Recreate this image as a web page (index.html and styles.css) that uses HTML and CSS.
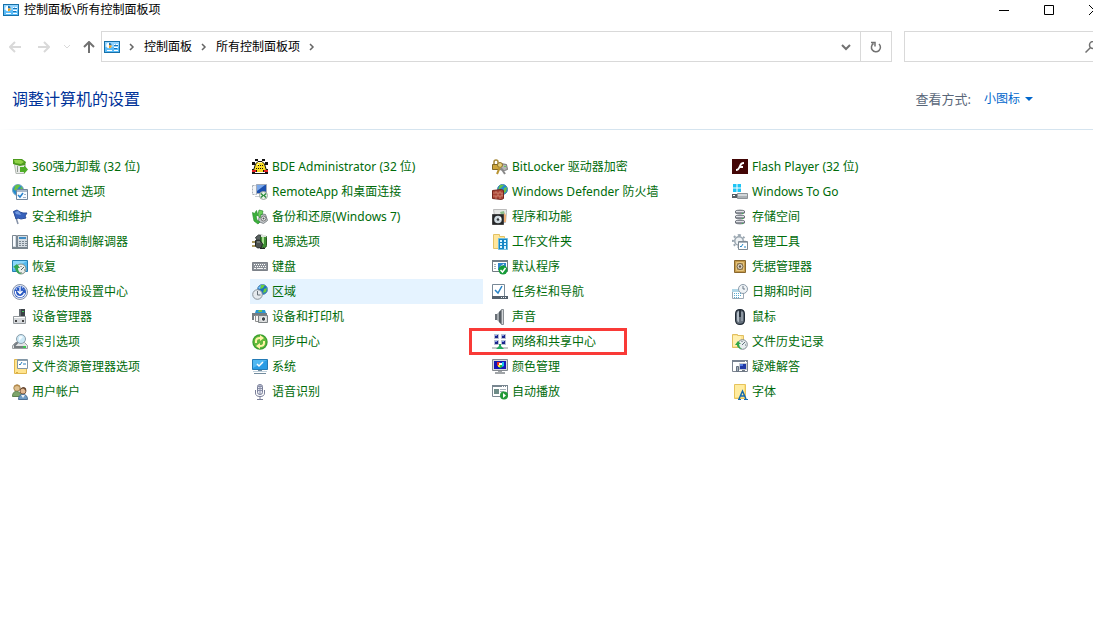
FILE: index.html
```html
<!DOCTYPE html>
<html lang="zh-CN">
<head>
<meta charset="utf-8">
<meta name="viewport" content="width=device-width, initial-scale=1">
<title>控制面板\所有控制面板项</title>
<link rel="stylesheet" href="styles.css">
</head>
<body>
<svg class="sprite" aria-hidden="true">
  <symbol id="panel" viewBox="0 0 16 12">
    <path fill="#1670a8" d="M0 0h16v12H0z"/><path fill="#8fd3ff" d="M1 1h14v10H1z"/><path fill="#5bbcf8" d="M1 6h14v5H1z"/>
    <circle cx="5" cy="4.500" r="2.700" fill="#fff"/><path fill="#1673b5" d="M5 4.500V1.800a2.700 2.700 0 0 1 2.700 2.700z"/><path fill="#f2a31b" d="M5 4.500h2.700A2.700 2.700 0 0 1 5 7.200z"/>
    <path fill="#fff" d="M10 3h1v1h-1zm2 0h2v1h-2zm-2 3h4v1h-4zM3 9h5v1H3zm7 0h4v1h-4z"/><path fill="#1673b5" d="M10 4h4v1h-4zm0 3h3v1h-3z"/>
  </symbol>
</svg>
<div class="window">
  <header class="titlebar">
    <svg class="panel-icon"><use href="#panel"/></svg>
    <h1 class="title">控制面板\所有控制面板项</h1>
    <button class="caption" aria-label="最小化"><svg viewBox="0 0 10 10"><path d="M0 5.500h10"/></svg></button>
    <button class="caption" aria-label="最大化"><svg viewBox="0 0 10 10"><path d="M.5.500h9v9h-9z"/></svg></button>
    <button class="caption" aria-label="关闭"><svg viewBox="0 0 10 10"><path d="m0 0 10 10M10 0 0 10"/></svg></button>
  </header>
  <nav class="navbar" aria-label="导航">
    <button class="nav-button" disabled aria-label="后退"><svg viewBox="0 0 12 12"><path d="M12 6H1m5-5L1 6l5 5"/></svg></button>
    <button class="nav-button" disabled aria-label="前进"><svg viewBox="0 0 12 12"><path d="M0 6h11M6 1l5 5-5 5"/></svg></button>
    <button class="nav-button recent" disabled aria-label="最近浏览的位置"><svg viewBox="0 0 12 12"><path d="m3 4 3 3 3-3"/></svg></button>
    <button class="nav-button up" aria-label="上移"><svg viewBox="0 0 12 12"><path d="M6 12V1M1 6l5-5 5 5"/></svg></button>
    <div class="address">
      <svg class="panel-icon"><use href="#panel"/></svg>
      <svg class="chevron" viewBox="0 0 6 8"><path d="m1 1 3 3-3 3"/></svg>
      <a class="crumb" href="#">控制面板</a>
      <svg class="chevron" viewBox="0 0 6 8"><path d="m1 1 3 3-3 3"/></svg>
      <a class="crumb" href="#">所有控制面板项</a>
      <svg class="chevron" viewBox="0 0 6 8"><path d="m1 1 3 3-3 3"/></svg>
      <button class="history" aria-label="以前的位置"><svg viewBox="0 0 12 12"><path d="m2 4 4 4 4-4"/></svg></button>
      <button class="refresh" aria-label="刷新"><svg viewBox="0 0 12 12"><path d="M3.500 2.500A4.500 4.500 0 1 0 9 3M1 1.500h4v4"/></svg></button>
    </div>
    <div class="search">
      <input type="search" aria-label="搜索控制面板">
      <svg viewBox="0 0 12 12"><circle cx="8" cy="4" r="3.500"/><path d="M5.500 6.500.5 11.500"/></svg>
    </div>
  </nav>
</div>
<main>
  <div class="heading">
    <h2>调整计算机的设置</h2>
    <span class="view-label">查看方式:</span>
    <button class="view-button">小图标<i class="caret"></i></button>
  </div>
  <ul class="items">
    <li><a href="#"><svg viewBox="0 0 16 16"><path fill="#e9ebe9" stroke="#b3b9b3" d="M2.500 5.500h11l-1.500 9H4z"/><path fill="#4c9a1d" d="M1 0h9l4 3-1 3-5 1-7-2z"/><path fill="#8fd146" d="M2 1h7l3 2-3 2-6-1z"/><path fill="#4fae28" d="M8 8h4V6l4 4.500-4 4.500v-2H8z"/><path stroke="#8f9a8f" d="M5.500 7v6"/></svg>360强力卸载 (32 位)</a></li>
    <li><a href="#"><svg viewBox="0 0 16 16"><path fill="#111" d="M0 3h3v3H0zM3 0h3v2H3zm7 0h3v2h-3zm3 3h3v3h-3zM0 10h16v5H0z"/><path fill="#f8dc22" stroke="#111" d="M1.500 11.500 3.500 5 6 2.500h4L12.500 5l2 6.500z"/><path fill="#fff7a8" d="M6 3h4v1H6zM5 5h2v1H5z"/><path fill="#e32222" d="M0 11h4v2H0zm12 0h4v2h-4z"/><path fill="#fff" d="M3 13h10v1H3z"/><path stroke="#111" stroke-dasharray="1 1" d="M4 9.500h8M6 6.500h5"/><path fill="#f8dc22" d="M5 11h6v2H5z"/></svg>BDE Administrator (32 位)</a></li>
    <li><a href="#"><svg viewBox="0 0 16 16"><path fill="none" stroke="#a88a3a" stroke-width="1.500" d="M2 6V3a2 2 0 0 1 4 0v3"/><path fill="#cda53b" stroke="#806726" d="M.5 5.500h7v5h-7z"/><path fill="#b5b5b5" stroke="#777" d="m8.500 4.500 6 1 1 5-3 1-5-1z"/><circle cx="8" cy="6" r="2.500" fill="#e7cf7a" stroke="#8d722a"/><path stroke="#b99432" stroke-width="2" d="m8 8-3 7"/><path stroke="#888" stroke-width="2" d="m9 9 4 6"/><path fill="#65c957" d="M12 7h2v1h-2z"/></svg>BitLocker 驱动器加密</a></li>
    <li><a href="#"><svg viewBox="0 0 16 16"><path fill="#430606" d="M0 0h16v15H0z"/><path fill="#fff" d="M12 3v2c-2 0-2 .7-3 2h2v2H8c-1 2-2 3-4 3v-2c2 0 2.300-1.500 3-3 1-2.500 2-4 5-4z"/></svg>Flash Player (32 位)</a></li>

    <li><a href="#"><svg viewBox="0 0 16 16"><circle cx="6" cy="6" r="5.500" fill="#238bd0" stroke="#7ca9c6"/><path fill="#6ac241" d="M3 2c3-2 5-1 5 0L6 4 5 7 2 6zm6 0 2 3-3 1z"/><path fill="#f7fbff" stroke="#72869c" d="M4.500 5.500h11v10h-11z"/><path fill="#a8b8c9" d="M5 6h10v2H5z"/><path fill="none" stroke="#2780cc" stroke-width="1.500" d="m6 11 2 2 3-4"/><path stroke="#9fb3c8" d="M11 13.500h3m-2-3h2"/></svg>Internet 选项</a></li>
    <li><a href="#"><svg viewBox="0 0 16 16"><path fill="#f3f5f7" stroke="#a9b0b7" stroke-dasharray="2 1" d="M.5 1.500h4v9h-4z"/><path fill="#1b4fae" stroke="#a3abb8" d="M4.500.5h10v9h-10z"/><path fill="#7ba8ea" d="M5 1h8L5 7z"/><path fill="#c7cdd2" d="M3 12h5v1H3z"/><circle cx="11.500" cy="11.500" r="4" fill="#e8f0e8" stroke="#9aa59c"/><path fill="none" stroke="#278c3a" stroke-width="1.300" d="m9 9.500 2 2-2 2m5-4-2 2 2 2"/></svg>RemoteApp 和桌面连接</a></li>
    <li><a href="#"><svg viewBox="0 0 16 16"><circle cx="10.500" cy="5.500" r="5" fill="#238bd0" stroke="#4389ad"/><path fill="#67c248" d="M8 1h4L9 4l-3 2zm4 3 3-1-1 5-2 1z"/><path fill="#a94234" stroke="#71261e" d="m.5 6.500 9-1 2 1v8l-2 1-9-1z"/><path stroke="#dfa28b" stroke-width=".6" d="M1 9h10M1 12h10M4 7v2m4-2v2m-2 0v3m4-3v3m-6 0v3m4-3v3"/></svg>Windows Defender 防火墙</a></li>
    <li><a href="#"><svg viewBox="0 0 16 16"><path fill="#1ec4f4" d="M1 0h3.500v3.500H1zm4.500 0H9v3.500H5.500zM1 4.500h3.500V8H1zm4.500 0H9V8H5.500z"/><path fill="#555d63" d="M0 10h5v4H0z"/><path fill="#aab0b4" stroke="#8d9398" d="M5.500 9.500h10v5h-10z"/><path fill="#d3d7da" d="M6 10h9v2H6z"/><path fill="#fff" d="M1 11h2v1H1z"/></svg>Windows To Go</a></li>

    <li><a href="#"><svg viewBox="0 0 16 16"><path stroke="#8793a8" stroke-width="1.500" d="m2 2 4 13"/><path fill="#3762bd" stroke="#2d4f9b" d="M1.500 2.500 5 1l3 2 3 1h4l-2 3 1 2-5 1-3-1-2 1z"/><path fill="#7299de" d="m3 3 3-1 2 2 1 2-5-1z"/></svg>安全和维护</a></li>
    <li><a href="#"><svg viewBox="0 0 16 16"><path fill="#c4c8cb" stroke="#81878b" d="m7.500 4.500 6 1 2 6-4 3-5-2z"/><circle cx="11.500" cy="9.500" r="2.500" fill="#eceeef" stroke="#777"/><circle cx="11.500" cy="9.500" r="1" fill="#555"/><path fill="#3cb13b" stroke="#2d8f31" stroke-width=".7" d="m.5 3.500 2 1 2-3 1.500 5-2 .5 1 4 3 2-2 2-4-3-1-5z"/><path fill="#6fd35b" stroke="#2d8f31" stroke-width=".7" d="m7 1 4 1-1 4-1-1-1 4-2-3z"/></svg>备份和还原(Windows 7)</a></li>
    <li><a href="#"><svg viewBox="0 0 16 16"><path fill="#e6e7e5" stroke="#bbb" d="M1.500.5h13v3l-1 10h-10z"/><path fill="#8dbd8a" d="m8 3 4-1 1 4-3 2z"/><path fill="#efb07a" d="m12 4 2 2v7h-3z"/><path fill="#252628" stroke="#444" d="M.5 5.500h11v10H.5z"/><circle cx="6" cy="10.500" r="3.800" fill="#cfd9df"/><path fill="#fff" d="m6 10 3-2v3z"/><circle cx="6" cy="10.500" r="1.300" fill="#34383b"/></svg>程序和功能</a></li>
    <li><a href="#"><svg viewBox="0 0 16 16"><g fill="#8f949c" stroke="#6f747d"><path d="M3.500 2a5 1.500 0 0 1 9 0v2a5 1.500 0 0 1-9 0zM3.500 7a5 1.500 0 0 1 9 0v2a5 1.500 0 0 1-9 0zM3.500 12a5 1.500 0 0 1 9 0v2a5 1.500 0 0 1-9 0z"/></g><path stroke="#dfe1e6" d="M4 2.500h8m-8 5h8m-8 5h8"/><path fill="#35c04d" d="M10 4h1v1h-1zm0 5h1v1h-1zm0 5h1v1h-1z"/></svg>存储空间</a></li>

    <li><a href="#"><svg viewBox="0 0 16 16"><path fill="#d5dce2" stroke="#7b8791" d="M.5 1.500h4v12h-4zM5.500 1.500h10v12h-10z"/><path fill="#f9fcff" d="M1 2h2v10H1z"/><path fill="#3e8bc4" d="M7 3h7v2H7z"/><path stroke="#7b8791" stroke-dasharray="2 1" d="M7 7.500h8m-8 2h8m-8 2h8"/><path fill="#79858e" d="M0 13h16v2H0z"/></svg>电话和调制解调器</a></li>
    <li><a href="#"><svg viewBox="0 0 16 16"><path fill="#596160" stroke="#303635" d="m3.500 3.500 3-2.500 5 .5-2 4.500-4 1z"/><rect x="8.500" y="1.500" width="6" height="12" rx="2" fill="#3d8f33" stroke="#29571f"/><path fill="#a9dc92" d="M10 3h2v7h-2z"/><path fill="#dfe5df" d="M9 1h5v2H9z"/><path stroke="#8d7a2c" stroke-width="1.500" d="M0 8h4m-4 4h4"/><path fill="#4b514e" stroke="#202523" d="m3.500 6.500 4-.5 3 3.500-1 4-4 .5-2-2z"/><path stroke="#9aa39e" d="m5 8 3 0"/><path stroke="#202523" d="M8 14.500h5"/></svg>电源选项</a></li>
    <li><a href="#"><svg viewBox="0 0 16 16"><path fill="#ffe69c" stroke="#e3c264" d="M1.500.5h6v2h5v12h-11z"/><path fill="#1686c5" stroke="#71bddd" d="M6.500 4.500h9v11h-9z"/><path fill="#d9f4ff" d="M8 6h2v2H8zm4 0h2v2h-2zM8 9h2v2H8zm4 0h2v2h-2zm-4 3h2v2H8zm4 0h2v3h-2z"/></svg>工作文件夹</a></li>
    <li><a href="#"><svg viewBox="0 0 16 16"><g fill="none" stroke="#9aa6b0"><circle cx="7" cy="7" r="4" stroke-width="2"/><path stroke-width="2" stroke-dasharray="2 2.500" d="M7 1a6 6 0 1 1-.1 0"/></g><circle cx="7" cy="7" r="3.500" fill="#eef1f3"/><path fill="#fff" stroke="#7d8993" d="M6.500 7.500h9v8h-9z"/><path fill="#a8b4bd" d="M7 8h8v1H7z"/><path fill="none" stroke="#2386c6" d="m8 12 1 1 2-3m1 3h2"/></svg>管理工具</a></li>

    <li><a href="#"><svg viewBox="0 0 16 16"><path fill="#55b9ed" stroke="#2681b3" d="M.5 1.500h15v11H.5z"/><path fill="#8bd7fa" d="M1 2h14L1 10z"/><circle cx="9" cy="10" r="5" fill="#e9eeeb" stroke="#7f8f88"/><path fill="#32a650" d="m1 8 4-3 3 4H6q0 4 4 6-6 0-7-6z"/><path fill="none" stroke="#56615d" d="m9 11 3-3m-3-1v1m4 3h-1m-3 3v-1"/></svg>恢复</a></li>
    <li><a href="#"><svg viewBox="0 0 16 16"><path fill="#8b9097" stroke="#7c8188" d="M.5 3.500h15v8H.5z"/><path stroke="#fff" stroke-dasharray="1 1" d="M2 5.500h12m-11 2h11"/><path stroke="#f5f5f5" d="M2 9.500h2m1 0h6m1 0h2"/></svg>键盘</a></li>
    <li><a href="#"><svg viewBox="0 0 16 16"><path fill="#fff" stroke="#717b83" d="M.5 1.500h15v11H.5z"/><path fill="#737d86" d="M0 1h16v2H0z"/><path fill="#2f87cb" d="M6 4h8v7H6z"/><path stroke="#a5afb7" d="M2 5.500h2m-2 2h2m-2 2h2"/><path stroke="#fff" d="m8 8 4-3"/><circle cx="11" cy="11" r="4.500" fill="#159b38"/><path fill="none" stroke="#fff" stroke-width="1.500" d="m8.500 11 2 2 3-4"/></svg>默认程序</a></li>
    <li><a href="#"><svg viewBox="0 0 16 16"><path fill="#c49b4b" stroke="#8a672d" d="M2.500 1.500h11v12h-11z"/><path fill="none" stroke="#e5c581" d="M4.500 3.500h7v8h-7z"/><circle cx="8" cy="7.500" r="3" fill="#e1d8c4" stroke="#736247"/><circle cx="8" cy="7.500" r="1.200" fill="#65584a"/></svg>凭据管理器</a></li>

    <li><a href="#"><svg viewBox="0 0 16 16"><circle cx="8" cy="8" r="7.500" fill="#e5eaf3" stroke="#8592ab"/><circle cx="8" cy="8" r="6" fill="#2857c1"/><path fill="none" stroke="#fff" stroke-width="1.300" d="M3.500 7a4.500 4.500 0 0 0 9 2M8 3v6M5.500 7 8 9.500 10.500 7"/><path fill="none" stroke="#c7dcff" stroke-width="1.500" stroke-dasharray="1 1.500" d="M4 5.500q2-3 4-3t4 3"/></svg>轻松使用设置中心</a></li>
    <li class="selected"><a href="#"><svg viewBox="0 0 16 16"><circle cx="10.500" cy="5.500" r="5" fill="#1b71c1" stroke="#5c91b9"/><path fill="#6ccf3d" d="M9 1h4l-2 3-3 1zm3 4 3-1-1 4-3 1z"/><path fill="#83c9ff" d="m6 4 3-3-1 4z"/><circle cx="5.500" cy="10.500" r="4.800" fill="#e5eaee" stroke="#899299"/><path fill="none" stroke="#667078" d="M5.500 7v4h3"/></svg>区域</a></li>
    <li><a href="#"><svg viewBox="0 0 16 16"><path fill="#fff" stroke="#788896" d="M.5.5h12v12H.5z"/><path fill="none" stroke="#2682c5" stroke-width="1.500" d="m3 6 3 3 4-7"/><path fill="#54616d" d="M0 12h16v3H0z"/><path fill="#f0f3f5" d="M9 13h1v1H9zm2 0h1v1h-1zm2 0h1v1h-1z"/></svg>任务栏和导航</a></li>
    <li><a href="#"><svg viewBox="0 0 16 16"><path fill="#fff" stroke="#9ca9b4" d="M.5 5.500h11v9H.5z"/><path fill="#b1d6e6" d="M0 5h11v3H0z"/><path stroke="#5aabcf" stroke-dasharray="1 1" d="M2 9.500h8m-8 2h8m-8 2h6"/><circle cx="11" cy="5" r="4.500" fill="#eef2f5" stroke="#8d9caa"/><path fill="none" stroke="#6b7987" d="M11 2v3h2"/></svg>日期和时间</a></li>

    <li><a href="#"><svg viewBox="0 0 16 16"><path fill="#3b4145" d="M7 0h6v8H7z"/><path fill="#666d72" d="M7 0h2v8H7z"/><path fill="#43cb5c" d="M10 2h2v1h-2z"/><path fill="#d7dadd" stroke="#959a9e" d="M1.500 7.500h12v7h-12z"/><path fill="#fff" d="M2 8h11v1H2z"/><path fill="#444" d="M3 11h2v2H3zm7 0h2v2h-2z"/></svg>设备管理器</a></li>
    <li><a href="#"><svg viewBox="0 0 16 16"><path fill="#2897d3" d="M4 1h9l1 3H3z"/><path fill="#79c44a" d="M7 1h3v2H6z"/><path fill="#767d82" d="M0 4h15v3H0zM0 7h2v4H0z"/><path fill="#f7f7f7" stroke="#929292" d="M3.500 6.500h3v6h-3z"/><path fill="#d5d7d7" stroke="#7b8083" d="M6.500 6.500h9v7h-9z"/><circle cx="11.500" cy="10" r="2.300" fill="#42494e" stroke="#fff"/></svg>设备和打印机</a></li>
    <li><a href="#"><svg viewBox="0 0 16 16"><path fill="#6b7177" d="M3 5h2v6H3z"/><path fill="#a4aaaf" d="m5 5 5-5v16l-5-5z"/><path fill="#555c62" d="m7 3 2-2v14l-2-2z"/><path fill="#d4d7da" stroke="#878d92" d="M9.500.5h2v15h-2z"/></svg>声音</a></li>
    <li><a href="#"><svg viewBox="0 0 16 16"><path fill="#68737f" stroke="#202a35" stroke-width="1.200" d="M3.600 5q0-4.400 4.400-4.400T12.400 5v6q0 4.400-4.400 4.400T3.600 11z"/><path fill="#b3bdc7" d="M5 4q1-2 2-2v11q-2 0-2-3z"/><path stroke="#17202a" stroke-width="1.500" d="M8 1v7"/><path stroke="#b3bdc7" d="M10 3v9"/></svg>鼠标</a></li>

    <li><a href="#"><svg viewBox="0 0 16 16"><path fill="#e3e5e6" stroke="#9da0a2" d="m3.500 8.500-3 3v3h15v-3l-3-3z"/><path fill="#777d80" d="M2 12h12v2H2z"/><path fill="#3cc34f" d="M11 12h3v2h-3z"/><path stroke="#737b82" stroke-width="2" d="m6 8-4 4"/><circle cx="9" cy="5" r="4.500" fill="#cce8f5" stroke="#8b9eab"/><path fill="#f4fbff" d="M7 3q2-2 4 0L7 7z"/></svg>索引选项</a></li>
    <li><a href="#"><svg viewBox="0 0 16 16"><circle cx="8" cy="8" r="7.700" fill="#399f2e"/><circle cx="8" cy="8" r="6.500" fill="#63b93d"/><path fill="none" stroke="#fff3a6" stroke-width="2" d="M4 9V7q0-3 4-3M12 7v2q0 3-4 3"/><path fill="#fff3a6" d="m8 1 4 3-4 3zM8 9l-4 3 4 3z"/></svg>同步中心</a></li>
    <li class="marked"><a href="#"><svg viewBox="0 0 16 16"><g fill="#1d258b" stroke="#b9c0d2"><path d="M2.500.5h4v4h-4zM9.500.5h4v4h-4zM2.500 6.500h4v4h-4zM9.500 6.500h4v4h-4z"/></g><path fill="#839ee9" d="M3 1h2v1H3zm7 0h2v1h-2zM3 7h2v1H3zm7 0h2v1h-2z"/><path fill="#c5c9c9" d="M0 13h16v2H0z"/><path fill="#25a85d" d="M7 10h2v2l3 3H4l3-3z"/></svg>网络和共享中心</a></li>
    <li><a href="#"><svg viewBox="0 0 16 16"><path fill="#ffe391" stroke="#dfbf60" d="M.5.5h5v1h6v12H.5z"/><path fill="#fff0b0" d="M1 2h8v10H1z"/><circle cx="10.500" cy="10.500" r="4.800" fill="#e7edef" stroke="#7f8990"/><path fill="#2fa646" d="m3 11 3-4 3 3H7q0 3 3 5-5-1-5-4z"/><path fill="none" stroke="#62717a" d="m10 11 3-3m-3-1v1m3 3h1"/></svg>文件历史记录</a></li>

    <li><a href="#"><svg viewBox="0 0 16 16"><path fill="#ffe48f" stroke="#dfb64e" d="M2.500.5h12v14h-12z"/><path fill="#d9ae40" d="M4 13h2v1H4z"/><path fill="#fff" stroke="#8296a6" d="M5.500.5h10v9h-10z"/><path fill="#8aa0b1" d="M6 1h9v1H6z"/><path fill="none" stroke="#287ebd" d="m7 5 1 1 2-3m1 2h3"/></svg>文件资源管理器选项</a></li>
    <li><a href="#"><svg viewBox="0 0 16 16"><path fill="#2a9ce5" stroke="#247bb6" d="M.5.5h15v10H.5z"/><path fill="#51b8f2" d="M1 1h14L1 9z"/><path fill="none" stroke="#fff" stroke-width="1.500" d="m5 5 2 2 4-4"/><path fill="#738c9e" d="M6 11h4v2H6zM2 14h12v1H2z"/><path stroke="#bfd0dc" d="M1 12.500h14"/></svg>系统</a></li>
    <li><a href="#"><svg viewBox="0 0 16 16"><path fill="#d8d9da" stroke="#858a90" d="M.5.5h15v11H.5z"/><path fill="#1616b5" d="M2 2h12v8H2z"/><path fill="#e62b23" d="M5 3h3v4H5z"/><path fill="#29bf38" d="M8 5h4L9 9H7z"/><path fill="#16c1ed" d="M10 3h2v4l-2 1z"/><path fill="#fff" d="M7 4h3v2H7z"/><path fill="#f8e337" d="M6 6h2v2H6z"/><path fill="#a1a5a8" d="M6 12h4v1H6zM3 13h10v2H3z"/></svg>颜色管理</a></li>
    <li><a href="#"><svg viewBox="0 0 16 16"><path fill="#fff" stroke="#7c8490" d="M.5 1.500h15v11H.5z"/><path fill="#798391" d="M0 1h16v2H0z"/><path fill="#fff" d="M13 2h1v1h-1z"/><path fill="#a5afbc" stroke="#65717f" d="M4.500 7.500h2v5h-2z"/><path fill="#2038a5" stroke="#c3c8cf" d="M7.500 4.500h7v6h-7z"/><path fill="#537de0" d="M8 5h3v2H8z"/><path fill="#707985" d="M10 11h3v1h-3zm-2 1h7v1H8z"/></svg>疑难解答</a></li>

    <li><a href="#"><svg viewBox="0 0 16 16"><circle cx="5" cy="4" r="3.200" fill="#e0c08e" stroke="#a5844f"/><path fill="#7ea56b" stroke="#5d824e" d="M.5 12.500q0-5 4-5t5 5z"/><path fill="#b58a4c" d="M2 3q1-3 5-2l1 2-3-1z"/><circle cx="11" cy="7" r="3" fill="#e2b890" stroke="#805c42"/><path fill="#6f9bc4" stroke="#4c6f94" d="M6.500 15.500q0-5 4.500-5t4.500 5z"/><path fill="#684832" d="M8 6q1-3 4-3 3 1 2 4l-3-3z"/><path fill="#eef2f5" d="m9 11 2 3 2-3z"/></svg>用户帐户</a></li>
    <li><a href="#"><svg viewBox="0 0 16 16"><path fill="#e5e7f0" stroke="#7a7f99" d="M5.500 2.500q0-2 2.500-2t2.500 2v6q0 2-2.500 2t-2.500-2z"/><path stroke="#8a90aa" d="M6 2.500h4m-4 2h4m-4 2h4M8 1v9"/><path fill="none" stroke="#7a7f99" d="M3.500 6v3q0 3.500 4.500 3.500t4.500-3.500V6M8 12v3m-3 .500h6"/></svg>语音识别</a></li>
    <li><a href="#"><svg viewBox="0 0 16 16"><path fill="#fff" stroke="#7b8790" d="M.5 1.500h15v11H.5z"/><path fill="#788690" d="M0 1h16v2H0z"/><path fill="#6e8c87" d="M2 5h5v5H2z"/><path stroke="#a7b2ba" d="M8 5.500h6m-6 2h4"/><path stroke="#fff" stroke-dasharray="1 1" d="M10 2.500h5"/><circle cx="12" cy="11.500" r="4" fill="#239a38"/><path fill="#fff" d="m11 9 3 2.500-3 2.500z"/></svg>自动播放</a></li>
    <li><a href="#"><svg viewBox="0 0 16 16"><path fill="#ffe077" stroke="#e6c35c" d="M2.500.5h11v14h-11z"/><path fill="#ffeca0" d="M3 1h9v12H3z"/><path fill="none" stroke="#1469ad" stroke-width="1.500" d="m7 15 3.500-8 3.500 8m-5-3h4"/><path stroke="#1469ad" d="M6 15.500h3m3 0h4"/></svg>字体</a></li>
  </ul>
</main>
</body>
</html>
```
FILE: styles.css
```css
* { box-sizing: border-box; }

body {
  margin: 0;
  overflow-x: hidden;
  background: #fff;
  color: #000;
  font: 12px/20px "Noto Sans", "Noto Sans CJK SC", sans-serif;
}

h1, h2 { margin: 0; font-weight: 400; }
button { margin: 0; padding: 0; border: 0; background: none; font: inherit; color: inherit; }
a { color: inherit; text-decoration: none; }
svg { flex: none; fill: none; }
.sprite { display: none; }
.panel-icon { width: 16px; height: 12px; }

/* The frame runs past the right edge of the viewport. */
.window { margin-right: -23px; }

.titlebar {
  display: flex;
  align-items: center;
  height: 20px;
  padding-left: 3px;
}
.title { flex: 1; margin-left: 5px; font-size: 12px; }
.caption { display: grid; place-items: center; width: 45px; height: 20px; }
.caption svg { width: 10px; height: 10px; stroke: #000; }

.navbar {
  display: flex;
  align-items: center;
  padding: 11px 12px 0 0;
}
.nav-button {
  display: grid;
  place-items: center;
  width: 29px;
  height: 30px;
  color: #717171;
}
.nav-button svg { width: 12px; height: 12px; stroke: currentColor; stroke-width: 2; }
.nav-button:disabled { color: #d9d9d9; }
.nav-button.recent { width: 18px; }
.nav-button.recent svg { stroke-width: 1; }
.nav-button.up { width: 25px; }

.address {
  display: flex;
  flex: 1;
  align-items: center;
  height: 31px;
  margin-right: 12px;
  padding-left: 2px;
  border: 1px solid #d9d9d9;
}
.chevron { width: 6px; height: 8px; margin: 0 9px; stroke: #666; stroke-width: 1.5; }
.crumb { white-space: nowrap; }
.history, .refresh { display: grid; place-items: center; width: 28px; height: 29px; }
.history { margin-left: auto; }
.refresh { width: 31px; border-left: 1px solid #d9d9d9; }
.history svg, .refresh svg { width: 12px; height: 12px; stroke: #717171; stroke-width: 2; }
.refresh svg { stroke-width: 1.5; }

.search {
  display: flex;
  align-items: center;
  width: 200px;
  height: 31px;
  padding-right: 6px;
  border: 1px solid #d9d9d9;
}
.search input { flex: 1; min-width: 0; height: 29px; border: 0; outline: 0; background: none; font: inherit; }
.search svg { width: 12px; height: 12px; stroke: #717171; stroke-width: 1.5; }

.heading {
  display: flex;
  align-items: center;
  height: 68px;
  padding: 6px 60px 0 12px;
  border-bottom: 1px solid;
  border-image: linear-gradient(to right, #fff, #d5e4ef 80px) 1;
}
.heading h2 { flex: 1; color: #039; font-size: 16px; line-height: 24px; }
.view-label { margin-right: 13px; color: #5a6779; font-size: 13px; }
.view-button { display: flex; align-items: center; gap: 5px; color: #06c; }
.caret { border: 4px solid transparent; border-top-color: #06c; border-bottom: 0; }

.items {
  display: grid;
  grid-template-columns: repeat(auto-fill, 233px);
  column-gap: 7px;
  margin: 0;
  padding: 24px 0 24px 10px;
  list-style: none;
}
.items li { position: relative; }
.items a {
  display: flex;
  align-items: center;
  gap: 4px;
  height: 25px;
  padding-left: 2px;
  color: #006b0a;
  white-space: pre;
}
.items svg { width: 16px; height: 16px; }
.selected { background: #e5f3ff; }

/* Red callout drawn over the entry. */
.marked::after {
  content: "";
  position: absolute;
  inset: -1px 96px -1px -21px;
  border: 3px solid #f93a37;
  pointer-events: none;
}
```
